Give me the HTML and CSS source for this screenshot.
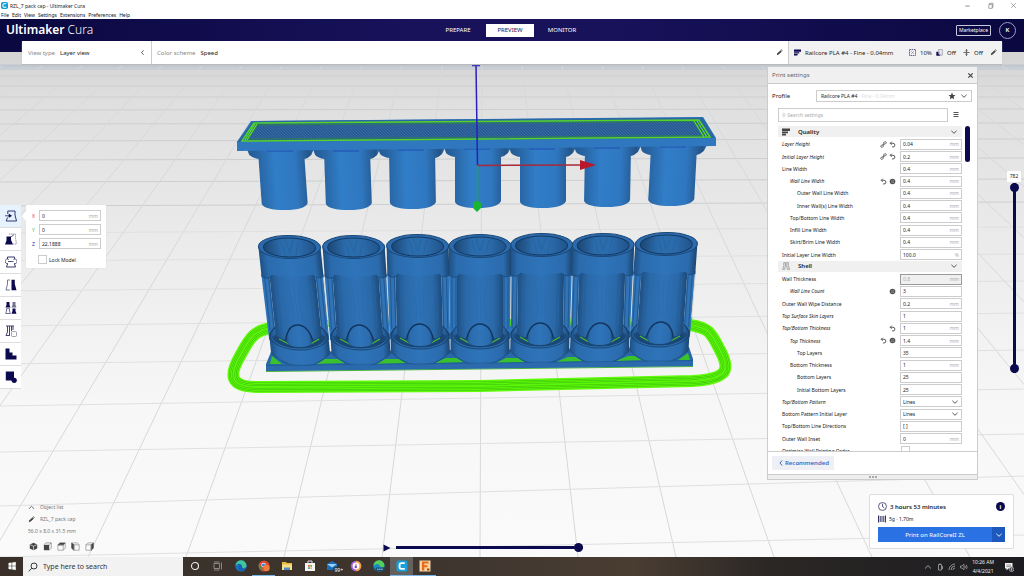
FILE: index.html
```html
<!DOCTYPE html>
<html lang="en">
<head>
<meta charset="utf-8">
<title>RZL_7 pack cap - Ultimaker Cura</title>
<link rel="stylesheet" href="styles.css">
</head>
<body>
<svg class="sprites" aria-hidden="true">
  <symbol id="chev-down" viewBox="0 0 8 8"><path d="M1.400 2.800 4 5.300 6.600 2.800" fill="none" stroke="currentColor" stroke-width=".9"/></symbol>
  <symbol id="chev-left" viewBox="0 0 8 8"><path d="M5.200 1.500 2.900 4 5.200 6.500" fill="none" stroke="currentColor" stroke-width="1"/></symbol>
  <symbol id="chev-up" viewBox="0 0 8 8"><path d="M1 5.500 4 2.600 7 5.500" fill="none" stroke="currentColor" stroke-width=".9"/></symbol>
  <symbol id="pencil" viewBox="0 0 8 8"><path d="M1 7 1.600 4.900 5.200 1.300 6.700 2.800 3.100 6.400Z" fill="currentColor"/><path d="M5.600.9 6.300.4 7.600 1.700 7.100 2.400Z" fill="currentColor"/></symbol>
  <symbol id="reset" viewBox="0 0 8 8"><path d="M1.500 2.600H4.600a2.100 2.100 0 0 1 0 4.200H3.400M3.100.8 1.300 2.600 3.100 4.400" fill="none" stroke="currentColor" stroke-width="1"/></symbol>
  <symbol id="link" viewBox="0 0 8 8"><g fill="none" stroke="currentColor" stroke-width=".9"><rect x="4" y="1" width="3.200" height="2.400" rx="1.200" transform="rotate(-45 5.600 2.200)"/><rect x=".8" y="4.600" width="3.200" height="2.400" rx="1.200" transform="rotate(-45 2.400 5.800)"/><path d="M3 5 5 3"/></g></symbol>
  <symbol id="fx" viewBox="0 0 8 8"><circle cx="4" cy="4" r="3.200" fill="currentColor"/><path d="M3.300 1.500V6.500M5 1.700V6.300M1.500 3.200H6.500M1.500 5H6.500" stroke="#bbb" stroke-width=".4"/></symbol>
  <symbol id="quality" viewBox="0 0 8 8"><path d="M0 .5H8V3H0ZM0 3.600H6V5.200H0ZM0 5.800H4V7.400H0Z" fill="currentColor"/></symbol>
  <symbol id="shell" viewBox="0 0 8 8"><path d="M1.800.6H3.400V3.800L2.600 7.400H.6L1.800 3.800ZM4.700.6H6.300V3.800L7.500 7.400H5.400L4.700 3.800Z" fill="none" stroke="currentColor" stroke-width=".7"/></symbol>
</svg>

<header class="titlebar">
  <svg class="app-icon" viewBox="0 0 8 8"><rect width="8" height="8" rx="2" fill="#0e9fd8"/><path d="M6 2H3.500Q2.200 2 2.200 3.200V4.800Q2.200 6 3.500 6H6" fill="none" stroke="#fff" stroke-width="1.200"/></svg>
  <span class="grow">RZL_7 pack cap - Ultimaker Cura</span>
  <button class="win" aria-label="Minimize"><svg viewBox="0 0 8 8"><path d="M2 4.500H6" stroke="#777" stroke-width=".7"/></svg></button>
  <button class="win" aria-label="Restore"><svg viewBox="0 0 8 8"><path d="M2.500 3H5.500V6.500H2.500ZM3.300 3V2H6.200V5.500H5.500" fill="none" stroke="#666" stroke-width=".5"/></svg></button>
  <button class="win" aria-label="Close"><svg viewBox="0 0 8 8"><path d="M2 2 6 6M6 2 2 6" stroke="#666" stroke-width=".5"/></svg></button>
</header>
<nav class="menubar" aria-label="Menu">
  <a href="#file">File</a><a href="#edit">Edit</a><a href="#view">View</a><a href="#settings">Settings</a><a href="#extensions">Extensions</a><a href="#preferences">Preferences</a><a href="#help">Help</a>
</nav>
<div class="appbar">
  <div class="brand"><b>Ultimaker</b> <span>Cura</span></div>
  <nav class="stages" aria-label="Stages">
    <button>PREPARE</button><button class="on">PREVIEW</button><button>MONITOR</button>
  </nav>
  <div class="account"><button class="market">Marketplace</button><button class="avatar">K</button></div>
</div>

<main class="workspace">
  <svg class="scene" viewBox="0 52 1024 505" preserveAspectRatio="xMidYMid slice" aria-hidden="true">
    <defs>
      <linearGradient id="floor" x1="0" y1="0" x2="0" y2="1"><stop offset="0" stop-color="#d4d4d4"/><stop offset=".1" stop-color="#dfdfdf"/><stop offset=".4" stop-color="#ececec"/><stop offset=".7" stop-color="#f7f7f7"/><stop offset="1" stop-color="#fafafa"/></linearGradient>
      <linearGradient id="tube"><stop offset="0" stop-color="#245a92"/><stop offset=".12" stop-color="#27629f"/><stop offset=".4" stop-color="#317dc7"/><stop offset=".7" stop-color="#2f78c1"/><stop offset=".93" stop-color="#235488"/><stop offset="1" stop-color="#2c70b4"/></linearGradient>
      <linearGradient id="stem"><stop offset="0" stop-color="#1f5083"/><stop offset=".2" stop-color="#2a69a9"/><stop offset=".5" stop-color="#2e72b6"/><stop offset=".8" stop-color="#2a69a9"/><stop offset="1" stop-color="#1d4b7b"/></linearGradient>
      <linearGradient id="collar"><stop offset="0" stop-color="#1f5083"/><stop offset=".12" stop-color="#2a6bad"/><stop offset=".5" stop-color="#2f74b9"/><stop offset=".88" stop-color="#2a6bad"/><stop offset="1" stop-color="#1c4672"/></linearGradient>
      <linearGradient id="bore"><stop offset="0" stop-color="#1c4672"/><stop offset=".35" stop-color="#2b6cad"/><stop offset=".65" stop-color="#2b6cad"/><stop offset="1" stop-color="#215389"/></linearGradient>
      <pattern id="hatch" width="3" height="3" patternUnits="userSpaceOnUse"><rect width="3" height="3" fill="#285b93"/><path d="M0 0 3 3" stroke="#3d72a8" stroke-width=".7"/></pattern>
      <g id="peg">
        <path d="M-34-2H33L30 4Q27 7 23 8V52Q20 59 0 59Q-20 59 -23 53V8Q-29 7 -32 4Z" fill="url(#tube)"/>
        <path d="M-14 0H12" stroke="#1d3fae" stroke-width=".8"/>
      </g>
      <g id="cup">
        <path d="M-31-64H-23V2H-30ZM23-64H31L30 2H23Z" fill="#2f73b8"/>
        <path d="M-24-64V-2M24-64V-2M-28-60V-8M28-60V-8" stroke="#205285" stroke-width=".8"/>
        <path d="M31-60 30.500-14" stroke="#dcd8ce" stroke-width="1"/>
        <path d="M30.500-18V-11" stroke="#48d327"/>
        <path d="M-29.500-4Q-20-14 0-14T29.500-4V16Q18 28 0 28T-29.500 16Z" fill="url(#collar)"/>
        <path d="M-29-2Q-27-9-20-12M29-2Q27-9 20-12" fill="none" stroke="#173e69" stroke-width="1"/>
        <path d="M-25-1A25 11 0 0 0 25-1Q22-8 0-8T-25-1Z" fill="#1c4775"/>
        <path d="M-23-65H23V-3Q18 3 0 3T-23-3Z" fill="url(#stem)"/>
        <path d="M-20 1-11 6M20 1 11 6" stroke="#42bd38" stroke-width="1.300"/>
        <path d="M-13 4V1Q-11-13 0-13T13 1V4Q11 9 0 9T-13 4Z" fill="url(#collar)"/>
        <path d="M-13.500 2C-11-8-7-13 0-13S11-8 13.500 2" fill="none" stroke="#12355e" stroke-width="1.300"/>
        <path d="M-29-2A29 14 0 0 0 29-2M-26-2A26 12 0 0 0 26-2" fill="none" stroke="#194672" stroke-width="1"/>
        <path d="M-29.500 14Q-18 28 0 28T29.500 14" fill="none" stroke="#1f5389" stroke-width="1"/>
        <path d="M-31-91V-62Q-25-57-20-63Q0-59 20-63Q25-59 31-62V-91Z" fill="url(#collar)"/>
        <path d="M-31-62Q-25-57-20-63M20-63Q25-58 31-62" fill="none" stroke="#1d4e80" stroke-width="1"/>
        <path d="M-6-55Q0-20-5-17M0-58 1-18M7-55Q2-38 6-18M-12-58-11-16M13-54V-17M-18-56V-10M18-56V-10" fill="none" stroke="#286aab" stroke-width=".5"/>
        <ellipse cy="-91" rx="31" ry="11.500" fill="#2b6aac" stroke="#1a4776" stroke-width="1"/>
        <ellipse cy="-90.500" rx="26" ry="9.500" fill="url(#bore)" stroke="#143b66" stroke-width="1"/>
        <path d="M-4-98 0-86 4-98M-8-97-5-83M9-97 6-83" fill="none" stroke="#245d98" stroke-width=".6"/>
      </g>
      <path id="skirt" d="M272 328C252 330 248 342 240 356C228 377 231 387 258 387L480 386 692 381C728 379 730 370 721 352C711 333 710 328 690 325"/>
    </defs>
    <rect y="52" width="1024" height="505" fill="url(#floor)"/>
    <rect y="64" width="1024" height="6" fill="#c9ced4"/>
    <path d="M0 66H1024" stroke="#b9c2cc"/>
    <g fill="none" stroke="#cccecf" stroke-width="1">
      <path d="M0 76H1024M0 86H1024M0 97H1024M0 110 1024 109M0 124 1024 123M0 141 1024 139M0 160 1024 158M0 182 1024 179M0 206 1024 202"/>
      <path d="M482 66 480 557M442 66 382 557M402 66 284 557M362 66 186 557M322 66 88 557M282 66-10 557M242 66-108 557M202 66-206 557M162 66-304 557M122 66-402 557M82 66-500 557M42 66-598 557M2 66-696 557M522 66 578 557M562 66 676 557M602 66 774 557M642 66 872 557M682 66 970 557M722 66 1068 557M762 66 1166 557M802 66 1264 557M842 66 1362 557M882 66 1460 557M922 66 1558 557M962 66 1656 557M1002 66 1754 557" stroke="#d6d8da"/>
      <path d="M0 233 1024 227M0 261 1024 254M0 291 1024 281M0 326 1024 313M0 364 1024 350M0 406 1024 389M0 452 1024 434M0 506 1024 476M0 557 1024 535" stroke="#dfe0e1"/>
    </g>

    <g fill="none">
      <use href="#skirt" stroke="#62fb0b" stroke-width="12"/>
      <use href="#skirt" stroke="#3cc00c" stroke-width="9"/>
      <use href="#skirt" stroke="#5bf50a" stroke-width="8"/>
      <use href="#skirt" stroke="#3cc00c" stroke-width="6"/>
      <use href="#skirt" stroke="#5bf50a" stroke-width="5"/>
      <use href="#skirt" stroke="#3cc00c" stroke-width="3"/>
      <use href="#skirt" stroke="#5bf50a" stroke-width="2"/>
    </g>
    <path d="M271 352 689 347 693 359V366L266 371V364Z" fill="#2968a9"/>
    <path d="M266 371.500 693 366.500" stroke="#48b437" stroke-width="1"/>
    <path d="M270 364 272 356 282 364ZM312 364 322 359 338 359 345 363ZM374 364 384 359 400 359 406 363ZM434 363 446 358 460 358 466 362ZM496 363 506 358 520 358 527 362ZM556 362 568 357 582 357 588 361ZM616 361 628 356 642 356 648 360ZM678 360 688 353 690 360Z" fill="#39c22b"/>
    <g>
      <use href="#cup" transform="translate(299 338) skewX(6)"/>
      <use href="#cup" transform="translate(360 338) skewX(4)"/>
      <use href="#cup" transform="translate(660 335) skewX(-4)"/>
      <use href="#cup" transform="translate(600 336) skewX(-2)"/>
      <use href="#cup" transform="translate(420 337) skewX(1.500)"/>
      <use href="#cup" transform="translate(540 336) skewX(-1)"/>
      <use href="#cup" transform="translate(480 337)"/>
    </g>
    <path d="M266 366 693 361V366L266 371Z" fill="#2a6aad"/>
    <path d="M266 365.500 693 360.500" stroke="#20578e" stroke-width=".6"/>

    <use href="#peg" transform="translate(281 151) skewX(4)"/>
    <use href="#peg" transform="translate(347 151) skewX(2)"/>
    <use href="#peg" transform="translate(412 150) skewX(1)"/>
    <use href="#peg" transform="translate(478 149)"/>
    <use href="#peg" transform="translate(543 149)"/>
    <use href="#peg" transform="translate(608 148) skewX(-1)"/>
    <use href="#peg" transform="translate(674 147) skewX(-3)"/>
    <path d="M251 121 703 117 716 138V146L237 151V142Z" fill="#2f77bf"/>
    <path d="M253 121 703 117.500 715 138 237 142Z" fill="#2b67a4"/>
    <path d="M254 123 699 120 710 137 242 141Z" fill="url(#hatch)" stroke="#55d32b" stroke-width="1.500"/>
    <path d="M258 125 695 121.500 704 135.500 248 139Z" fill="none" stroke="#2b7d58" stroke-width="1"/>
    <path d="M255 124 245 140M257 124 247 140M697 121 707 137M694 121 704 137" stroke="#59e020" stroke-width="1.200"/>
    <path d="M472 65.500H480M476 65 477.500 165" stroke="#2a20bd" stroke-width="1.500"/>
    <path d="M477.500 165.500 582 165" stroke="#a92839" stroke-width="1.500"/>
    <path d="M580 160 596 165 580 170Z" fill="#b8182a"/>
    <path d="M477.500 166V203" stroke="#1ba648" stroke-width="1.500"/>
    <path d="M473 203Q477 199 481 203V208L477 212 473 208Z" fill="#18b530"/>
  </svg>

  <section class="stagebar">
    <button class="viewtype"><span class="dim">View type</span><span class="grow">Layer view</span><svg class="ic"><use href="#chev-left"/></svg></button>
    <button class="scheme"><span class="dim">Color scheme</span><span class="grow">Speed</span><svg class="ic"><use href="#pencil"/></svg></button>
    <button class="summary">
      <svg class="ic navy"><use href="#quality"/></svg><span class="name">Railcore PLA #4 - Fine - 0.04mm</span>
      <svg class="ic" viewBox="0 0 8 8"><rect x=".6" y=".6" width="6.800" height="6.800" fill="none" stroke="#23235a" stroke-width=".8" stroke-dasharray="1.800 .7"/><path d="M2.500 2.500 5.500 5.500M5.500 2.500 2.500 5.500" stroke="#77779a" stroke-width=".7"/></svg><span class="val">10%</span>
      <svg class="ic" viewBox="0 0 8 8"><path d="M2.800.7H7.200V7H4.800Z" fill="none" stroke="#666689" stroke-width=".6"/><path d="M.4 3H2.800V5.400L5 7.600H.4Z" fill="#0c0a4e"/></svg><span class="val">Off</span>
      <svg class="ic" viewBox="0 0 8 8"><path d="M.5 4H7.500M4 0V3M4 8V5M2.700 1.800 4 3 5.300 1.800M2.700 6.200 4 5 5.300 6.200" fill="none" stroke="#333" stroke-width=".8"/></svg><span class="val">Off</span>
      <svg class="ic"><use href="#pencil"/></svg>
    </button>
  </section>

  <div class="content">
    <aside class="left">
      <div class="toolrow">
        <div class="tools" role="toolbar" aria-label="Tools">
          <button class="on" aria-label="Move"><svg viewBox="0 0 12 12"><path d="M2.800 1H10V5L11.500 11H1.200L2.500 7.500M2.800 1V4" fill="none" stroke="#23235e" stroke-width=".9"/><path d="M0 5.800H5M4 4.300 6.500 5.800 4 7.300Z" fill="#0c0a4e" stroke="#0c0a4e" stroke-width=".7"/></svg></button>
          <button aria-label="Scale"><svg viewBox="0 0 12 12"><path d="M4 1H10.500V5L11.500 11H8" fill="none" stroke="#8a8aa6" stroke-width=".8" stroke-dasharray="1.500 .6"/><path d="M1.500 3.500H6V7L8 11.500H0L1.500 7.500Z" fill="#0c0a4e"/><path d="M6 4 9 1.500" stroke="#33336a" stroke-width=".8"/></svg></button>
          <button aria-label="Rotate"><svg viewBox="0 0 12 12"><path d="M2.500 3V1H9.500V3M9.500 8 10.500 11H1.500L2.500 8" fill="none" stroke="#23235e" stroke-width=".9"/><path d="M3.800 3.500A2.300 2.300 0 1 0 3 7.500M8.500 3.500A2.300 2.300 0 1 1 9 7.500M3 5.500H8.500" fill="none" stroke="#44446f" stroke-width=".9"/></svg></button>
          <button aria-label="Mirror"><svg viewBox="0 0 12 12"><path d="M6.500.8H9.800V5L11.500 11.200H6.500Z" fill="#0c0a4e"/><path d="M5 1H2.500V5L1 11H5" fill="none" stroke="#55557c" stroke-width=".8"/></svg></button>
          <button aria-label="Per model settings"><svg viewBox="0 0 12 12"><path d="M1.500 0H4.500V3L5.500 5.400H.5L1.500 3ZM7.500 6.400H10.500V9L11.500 11.800H6.500L7.500 9Z" fill="#0c0a4e"/><path d="M7.500 0H10.500V3L11.500 5.400H6.500L7.500 3Z" fill="#74748f"/><path d="M1.500 6.700H4.500V9L5.300 11.500H.7L1.500 9Z" fill="none" stroke="#33336a" stroke-width=".7"/></svg></button>
          <button aria-label="Support blocker"><svg viewBox="0 0 12 12"><path d="M1 1H9M2.500 1V7L1 10.500H5M4.500 1V10M6.500 1V6M8 1V5" fill="none" stroke="#44446f" stroke-width="1"/><rect x="6.500" y="6.500" width="5" height="5" rx="1" fill="#fff" stroke="#777791" stroke-width=".7"/></svg></button>
          <button aria-label="Stairs"><svg viewBox="0 0 12 12"><path d="M.5.500H4.500V4.500H7.500V7.500H11.500V11.500H.5Z" fill="#0c0a4e"/></svg></button>
          <button aria-label="Measure"><svg viewBox="0 0 12 12"><path d="M.8.500H9V9.500H.8Z" fill="#0c0a4e"/><circle cx="9.200" cy="9.300" r="2.600" fill="#0c0a4e"/></svg></button>
        </div>
        <form class="movebox">
          <label><span class="x">X</span><span class="field"><input value="0"><i>mm</i></span></label>
          <label><span class="y">Y</span><span class="field"><input value="0"><i>mm</i></span></label>
          <label><span class="z">Z</span><span class="field"><input value="22.1888"><i>mm</i></span></label>
          <label class="lock"><input type="checkbox">Lock Model</label>
        </form>
      </div>
      <div class="objects">
        <button><svg class="ic"><use href="#chev-up"/></svg>Object list</button>
        <button><svg class="ic"><use href="#pencil"/></svg>RZL_7 pack cap</button>
        <span>56.0 x 8.0 x 31.5 mm</span>
        <div class="views">
          <button aria-label="3D view"><svg viewBox="0 0 8 8"><path d="M4 .6 7.300 2.200V5.800L4 7.400.7 5.800V2.200Z" fill="#444"/><path d="M1 2.400 4 3.800 7 2.400M4 3.800V7" fill="none" stroke="#eee" stroke-width=".6"/></svg></button>
          <button aria-label="Front view"><svg viewBox="0 0 8 8"><path d="M.8 2.500H5.500V7.300H.8Z" fill="#444"/><path d="M.8 2.500 2.500.8H7.300V5.500L5.500 7.300M5.500 2.500 7.300.8" fill="none" stroke="#777" stroke-width=".6"/></svg></button>
          <button aria-label="Top view"><svg viewBox="0 0 8 8"><path d="M.8 2.700 2.500.8H7.300L5.500 2.700Z" fill="#444" stroke="#444" stroke-width=".6"/><path d="M.8 2.500H5.500V7.300H.8ZM5.500 7.300 7.300 5.500V.8" fill="none" stroke="#888" stroke-width=".6"/></svg></button>
          <button aria-label="Left view"><svg viewBox="0 0 8 8"><path d="M.6.8 2.600 2.500V7.300L.6 5.500Z" fill="#444" stroke="#444" stroke-width=".6"/><path d="M.8.8H5.500L7.300 2.500V7.300H2.500V2.500H7.300" fill="none" stroke="#888" stroke-width=".6"/></svg></button>
          <button aria-label="Right view"><svg viewBox="0 0 8 8"><path d="M7.400.8 5.500 2.500V7.300L7.400 5.500Z" fill="#444" stroke="#444" stroke-width=".6"/><path d="M.8 2.500H5.500V7.300H.8ZM.8 2.500 2.500.8H7.300" fill="none" stroke="#888" stroke-width=".6"/></svg></button>
        </div>
      </div>
    </aside>

    <div class="player">
      <button aria-label="Play"><svg viewBox="0 0 8 8"><path d="M.5.500 7.500 4 .5 7.500Z" fill="#0c0a4e"/></svg></button>
      <input type="range" min="0" max="100" value="100" aria-label="Simulation position">
    </div>

    <aside class="right">
      <section class="panel">
        <header><h2>Print settings</h2><button aria-label="Close"><svg viewBox="0 0 8 8"><path d="M1.500 1.500 6.500 6.500M6.500 1.500 1.500 6.500" stroke="#444" stroke-width="1.400"/></svg></button></header>
        <div class="profile"><span id="pl">Profile</span>
          <button aria-labelledby="pl"><span class="grow">Railcore PLA #4 <em>- Fine - 0.04mm</em></span><svg class="ic" viewBox="0 0 8 8"><path d="M4 .6 5 2.900 7.500 3.100 5.600 4.800 6.200 7.300 4 6 1.800 7.300 2.400 4.800.5 3.100 3 2.900Z" fill="#444"/></svg><svg class="ic"><use href="#chev-down"/></svg></button>
        </div>
        <div class="search"><input type="search" placeholder="⚲ Search settings" aria-label="Search settings"><button aria-label="Visibility"><svg viewBox="0 0 8 8"><path d="M1.500 1.500H6.500M1.500 3.500H6.500M1.500 5.500H6.500" stroke="#555" stroke-width="1"/></svg></button></div>
        <div class="scroller">
          <div class="rows">
            <button class="cat"><svg class="ic"><use href="#quality"/></svg><span>Quality</span><svg class="ic"><use href="#chev-down"/></svg></button>
            <label class="chg"><span>Layer Height</span><svg class="ic"><use href="#link"/></svg><svg class="ic"><use href="#reset"/></svg><b class="field"><input value="0.04"><i>mm</i></b></label>
            <label class="chg"><span>Initial Layer Height</span><svg class="ic"><use href="#link"/></svg><svg class="ic"><use href="#reset"/></svg><b class="field"><input value="0.2"><i>mm</i></b></label>
            <label><span>Line Width</span><b class="field"><input value="0.4"><i>mm</i></b></label>
            <label class="chg in1"><span>Wall Line Width</span><svg class="ic"><use href="#reset"/></svg><svg class="ic"><use href="#fx"/></svg><b class="field"><input value="0.4"><i>mm</i></b></label>
            <label class="in2"><span>Outer Wall Line Width</span><b class="field"><input value="0.4"><i>mm</i></b></label>
            <label class="in2"><span>Inner Wall(s) Line Width</span><b class="field"><input value="0.4"><i>mm</i></b></label>
            <label class="in1"><span>Top/Bottom Line Width</span><b class="field"><input value="0.4"><i>mm</i></b></label>
            <label class="in1"><span>Infill Line Width</span><b class="field"><input value="0.4"><i>mm</i></b></label>
            <label class="in1"><span>Skirt/Brim Line Width</span><b class="field"><input value="0.4"><i>mm</i></b></label>
            <label><span>Initial Layer Line Width</span><b class="field"><input value="100.0"><i>%</i></b></label>
            <button class="cat"><svg class="ic soft"><use href="#shell"/></svg><span>Shell</span><svg class="ic"><use href="#chev-down"/></svg></button>
            <label><span>Wall Thickness</span><b class="field off"><input value="0.8" disabled><i>mm</i></b></label>
            <label class="chg in1"><span>Wall Line Count</span><svg class="ic"><use href="#fx"/></svg><b class="field"><input value="3"></b></label>
            <label><span>Outer Wall Wipe Distance</span><b class="field"><input value="0.2"><i>mm</i></b></label>
            <label class="chg"><span>Top Surface Skin Layers</span><b class="field"><input value="1"></b></label>
            <label class="chg"><span>Top/Bottom Thickness</span><svg class="ic"><use href="#reset"/></svg><b class="field"><input value="1"><i>mm</i></b></label>
            <label class="chg in1"><span>Top Thickness</span><svg class="ic"><use href="#reset"/></svg><svg class="ic"><use href="#fx"/></svg><b class="field"><input value="1.4"><i>mm</i></b></label>
            <label class="in2"><span>Top Layers</span><b class="field"><input value="35"></b></label>
            <label class="in1"><span>Bottom Thickness</span><b class="field"><input value="1"><i>mm</i></b></label>
            <label class="in2"><span>Bottom Layers</span><b class="field"><input value="25"></b></label>
            <label class="in2"><span>Initial Bottom Layers</span><b class="field"><input value="25"></b></label>
            <label class="chg"><span>Top/Bottom Pattern</span><b class="field"><select><option>Lines</option></select><svg class="ic"><use href="#chev-down"/></svg></b></label>
            <label><span>Bottom Pattern Initial Layer</span><b class="field"><select><option>Lines</option></select><svg class="ic"><use href="#chev-down"/></svg></b></label>
            <label><span>Top/Bottom Line Directions</span><b class="field"><input value="[ ]"></b></label>
            <label><span>Outer Wall Inset</span><b class="field"><input value="0"><i>mm</i></b></label>
            <label class="chk"><span>Optimize Wall Printing Order</span><input type="checkbox"></label>
          </div>
          <div class="thumb"></div>
        </div>
        <footer><button><svg class="ic"><use href="#chev-left"/></svg>Recommended</button></footer>
        <div class="grip"><svg viewBox="0 0 8 4"><path d="M0 2H2M3 2H5M6 2H8" stroke="#666" stroke-width="1.200"/></svg></div>
      </section>

      <div class="layers">
        <output>782</output>
        <div class="track">
          <input type="range" min="0" max="782" value="782" aria-label="Top layer">
          <input type="range" min="0" max="782" value="0" aria-label="Bottom layer">
        </div>
      </div>

      <section class="job">
        <div class="line"><svg class="big" viewBox="0 0 10 10"><circle cx="5" cy="5" r="4.400" fill="none" stroke="#222255" stroke-width=".8"/><path d="M5 2V5.200L7 6.500" fill="none" stroke="#222255" stroke-width=".8"/></svg><strong class="grow">3 hours 53 minutes</strong><button class="info" aria-label="Details">i</button></div>
        <div class="line small"><svg class="ic" viewBox="0 0 8 8"><path d="M.6.500V7.500M7.400.500V7.500" stroke="#222255" stroke-width="1"/><path d="M2.300 1V7M4 1V7M5.700 1V7" stroke="#55557c" stroke-width="1.100"/></svg><span>5g · 1.70m</span></div>
        <div class="print"><button class="grow">Print on RailCoreII ZL</button><button class="more" aria-label="Choose output"><svg class="ic"><use href="#chev-down"/></svg></button></div>
      </section>
    </aside>
  </div>
</main>

<footer class="taskbar">
  <button class="tb" aria-label="Start"><svg viewBox="0 0 12 12"><path d="M2.500 3 5.600 2.600V5.700H2.500ZM6.200 2.500 9.800 2V5.700H6.200ZM2.500 6.300H5.600V9.400L2.500 9ZM6.200 6.300H9.800V10L6.200 9.500Z" fill="#fff"/></svg></button>
  <label class="find"><svg viewBox="0 0 10 10"><circle cx="6" cy="4" r="3" fill="none" stroke="#222" stroke-width=".9"/><path d="M3.800 6.200.8 9.300" stroke="#222" stroke-width=".9"/></svg><input type="text" placeholder="Type here to search" aria-label="Type here to search"></label>
  <button class="tb" aria-label="Cortana"><svg viewBox="0 0 12 12"><circle cx="6" cy="6" r="3.500" fill="none" stroke="#eee" stroke-width="1.100"/></svg></button>
  <button class="tb" aria-label="Task view"><svg viewBox="0 0 12 12"><path d="M2 3.500H7.500V8.500H2ZM9.500 2.500V9.500M2 2H7.500M2 10H7.500" fill="none" stroke="#aaa" stroke-width=".7"/></svg></button>
  <button class="tb" aria-label="Edge"><svg viewBox="0 0 12 12"><circle cx="6" cy="6" r="5.600" fill="#1676c5"/><path d="M.5 6A5.500 5.500 0 0 1 11.500 5.500Q11.500 8 8.500 8 6.500 8 7 6 6 3.500 3 4.200 1 4.800.5 6Z" fill="#3fc7a0"/><path d="M1 5Q5 2 7 6 6 9 10 9.500 7 12 4 10.500 2 8 4.500 5 2.500 4 1 5Z" fill="#1b5fae"/></svg></button>
  <button class="tb open" aria-label="Chrome"><svg viewBox="0 0 12 12"><circle cx="6" cy="6" r="5.500" fill="#d94a35"/><path d="M1 3.500 5 10.800A5.500 5.500 0 0 1 1 3.500Z" fill="#3a9a4c"/><circle cx="5.500" cy="5" r="2.200" fill="#eee"/><circle cx="5.500" cy="5" r="1.600" fill="#3c7fe0"/><circle cx="8.500" cy="8" r="3.200" fill="#ee7c3c"/></svg></button>
  <button class="tb" aria-label="File Explorer"><svg viewBox="0 0 12 12"><path d="M1 2H5L6 3H11V10H1Z" fill="#e9bd3c"/><path d="M1 4.500H11V10H1Z" fill="#f6df86"/><path d="M3 7.500H9V10H3Z" fill="#4d8dc6"/></svg></button>
  <button class="tb" aria-label="Store"><svg viewBox="0 0 12 12"><path d="M4 3V1H8V3" fill="none" stroke="#eee" stroke-width=".9"/><path d="M1 3H11V11H1Z" fill="#f4f4f0"/><path d="M4 5H5.800V6.800H4Z" fill="#e2573d"/><path d="M6.200 5H8V6.800H6.200Z" fill="#7ab33c"/><path d="M4 7.200H5.800V9H4Z" fill="#3b99dc"/><path d="M6.200 7.200H8V9H6.200Z" fill="#eebb33"/></svg></button>
  <button class="tb mail" aria-label="Mail"><svg viewBox="0 0 12 12"><path d="M0 4 5 1 10 4V10H0Z" fill="#1a6fbd"/><path d="M0 4H10L5 7.500Z" fill="#9ad4f5"/></svg><span>99+</span></button>
  <button class="tb" aria-label="Music"><svg viewBox="0 0 12 12"><circle cx="6" cy="6" r="5.300" fill="#a45be0"/><path d="M6 .7A5.300 5.300 0 0 1 6 11.300Z" fill="#f0a03c"/><circle cx="6" cy="6" r="3.400" fill="#fff"/><path d="M6 3.800V6.500" stroke="#d55" stroke-width="1"/><circle cx="5.800" cy="7" r="1.300" fill="#6a55c8"/></svg></button>
  <button class="tb" aria-label="Edge Dev"><svg viewBox="0 0 12 12"><circle cx="6" cy="6" r="5.600" fill="#1a8ccb"/><path d="M.5 6A5.500 5.500 0 0 1 11.500 5.500Q10 8.500 7.500 7 6.500 3.500 3 4.200 1 4.800.5 6Z" fill="#55d05c"/><rect x="2.500" y="7.500" width="9" height="3.500" rx="1" fill="#104d6e"/><path d="M4 9.200H10" stroke="#cde" stroke-width="1" stroke-dasharray="1.500 .6"/></svg></button>
  <button class="tb active open" aria-label="Cura"><svg viewBox="0 0 12 12"><rect x=".5" y=".5" width="11" height="11" rx="2.500" fill="#13a2dc"/><path d="M8.800 3.200H5.500Q3.600 3.200 3.600 5V7Q3.600 8.800 5.500 8.800H8.800" fill="none" stroke="#fff" stroke-width="1.800"/></svg></button>
  <button class="tb open" aria-label="Fusion"><svg viewBox="0 0 12 12"><rect x=".5" y=".5" width="11" height="11" fill="#f6d3a6"/><path d="M3 1.500H9.500V3.500H5.300V5.200H8.500V7.200H5.300V10.500H3Z" fill="#e36d18"/><path d="M8 8.500H10.500V10.500H8Z" fill="#a84b10"/></svg></button>
  <div class="tray">
    <svg class="ic"><use href="#chev-up"/></svg>
    <svg class="ic" viewBox="0 0 8 8"><path d="M2.500 1.500H5.500V7H2.500ZM4 .3V1.500M6.500 3V6" fill="none" stroke="currentColor" stroke-width=".8"/></svg>
    <svg class="ic" viewBox="0 0 8 8"><path d="M1 7A6 6 0 0 1 7 1M3 7A4 4 0 0 1 7 3M5 7A2 2 0 0 1 7 5" fill="none" stroke="currentColor" stroke-width=".8"/></svg>
    <svg class="ic" viewBox="0 0 8 8"><path d="M.5 3H2L4 1.300V6.700L2 5H.5ZM5 2.800Q6 4 5 5.200M6.300 1.800Q8 4 6.300 6.200" fill="none" stroke="currentColor" stroke-width=".7"/></svg>
    <time>10:26 AM<br>4/4/2021</time>
    <button class="note" aria-label="Notifications"><svg viewBox="0 0 10 10"><path d="M1 1H8.500V6.500H4.500L2.500 8.500V6.500H1Z" fill="#f2f2f2"/><path d="M2.300 3H7.200M2.300 4.600H7.200" stroke="#555" stroke-width=".6"/><circle cx="7.600" cy="7.400" r="2.300" fill="#444" stroke="#ddd" stroke-width=".5"/><path d="M7.600 6.200V8.600" stroke="#fff" stroke-width=".7"/></svg></button>
  </div>
</footer>
</body>
</html>
```
FILE: styles.css
```css
* { box-sizing: border-box; }
body {
  margin: 0;
  min-height: 100vh;
  display: flex;
  flex-direction: column;
  font-family: "Noto Sans", "Open Sans", sans-serif;
  font-size: 6px;
  line-height: 8px;
  color: #222;
  background: #fff;
}
button, input, select { font: inherit; color: inherit; margin: 0; padding: 0; border: 0; background: none; min-width: 0; }
button { text-align: left; }
svg { display: block; flex: none; }
.sprites { display: none; }
.grow { flex: 1; }
.ic { width: 8px; height: 8px; flex: none; }
.dim { color: #888; }
.navy { color: #0c0a4e; }

/* window frame */
.titlebar { height: 11px; display: flex; align-items: center; gap: 2px; padding-left: 1px; font-size: 5px; }
.app-icon { width: 7px; height: 7px; }
.win { width: 21px; display: flex; justify-content: center; }
.win svg { width: 9px; height: 9px; }
.menubar { height: 8px; display: flex; gap: 3px; padding-left: 1px; font-size: 5px; line-height: 8px; }
.menubar a { color: #111; text-decoration: none; }

.appbar {
  height: 22px;
  display: grid;
  grid-template-columns: 1fr auto 1fr;
  align-items: center;
  color: #fff;
  background: linear-gradient(90deg, #0a0840, #17125a 40%, #17125a 60%, #0a0840);
}
.brand { padding-left: 6px; font-size: 12px; line-height: 16px; font-weight: 300; }
.brand b { font-weight: 600; }
.stages { display: flex; gap: 4px; margin-right: 4px; }
.stages button { width: 48px; height: 13px; text-align: center; }
.stages .on { background: #fff; color: #17125a; }
.account { display: flex; justify-content: flex-end; align-items: center; gap: 8px; padding-right: 8px; }
.market { height: 11px; padding: 0 2px; border: 1px solid #c9c9dd; border-radius: 1px; font-size: 5px; }
.avatar { width: 17px; height: 17px; border: 1px solid #9c9cc4; border-radius: 50%; text-align: center; font-weight: 600; }

/* workspace */
.workspace {
  flex: 1;
  display: flex;
  flex-direction: column;
  position: relative;
  background: linear-gradient(90deg, #0a0840, #17125a 40%, #17125a 60%, #0a0840);
}
.scene { position: absolute; left: 0; top: 11px; width: 100%; height: calc(100% - 11px); }
.stagebar { position: relative; display: flex; height: 23px; margin: 0 22px; background: #fff; box-shadow: 0 1px 1px #bbb; }
.stagebar button { display: flex; align-items: center; gap: 5px; padding: 0 5px; }
.stagebar .ic { width: 7px; height: 7px; color: #444; }
.stagebar .navy { color: #0c0a4e; }
.viewtype { width: 129px; }
.stagebar .viewtype { padding-left: 6px; }
.stagebar .scheme { flex: 1; border-left: 1px solid #ccc; }
.stagebar .summary { width: 214px; background: #f2f2f2; border-left: 1px solid #ccc; gap: 4px; }
.summary .name { flex: 1; }
.summary .val { min-width: 12px; }

.content { flex: 1; display: flex; position: relative; }
.left { width: 106px; display: flex; flex-direction: column; }
.toolrow { display: flex; gap: 5px; align-items: flex-start; margin-top: 141px; }
.tools { width: 22px; display: flex; flex-direction: column; background: #fff; border-radius: 0 2px 2px 0; }
.tools button { height: 23px; display: flex; align-items: center; justify-content: center; border-bottom: 1px solid #ddd; }
.tools .on { background: #e6f2fd; }
.tools svg { width: 12px; height: 12px; }
.movebox { position: relative; flex: 1; display: flex; flex-direction: column; gap: 3px; padding: 5px 5px 4px 6px; background: #fff; border-radius: 1px; box-shadow: 0 0 2px #ddd; font-size: 5px; }
.movebox::before { content: ""; position: absolute; left: -4px; top: 6px; border: 5px solid transparent; border-left: 0; border-right: 4px solid #fff; }
.movebox label { display: flex; align-items: center; gap: 3px; }
.movebox label > span:first-child { width: 4px; }
.x { color: #e0364b; }
.y { color: #58b368; }
.z { color: #2b2bb5; }
.movebox .lock { padding: 3px 0 0 6px; gap: 2px; }

.field { display: flex; align-items: center; height: 11px; width: 62px; border: 1px solid #ccc; background: #fff; padding: 0 2px; font-weight: 400; font-style: normal; }
.movebox .field { flex: 1; }
.field input, .field select { flex: 1; width: 0; height: 9px; appearance: none; outline: 0; }
.field i { color: #aaa; font-style: normal; }
.off { border-color: #999; background: #f0f0f0; color: #aaa; }
input[type="checkbox"] { appearance: none; width: 9px; height: 9px; border: 1px solid #ccc; background: #fff; }

.objects { margin-top: auto; padding: 0 0 6px 28px; display: flex; flex-direction: column; gap: 4px; font-size: 5px; color: #777; }
.objects button { display: flex; align-items: center; gap: 5px; white-space: nowrap; }
.objects .ic { width: 7px; height: 7px; color: #444; }
.views { display: flex; gap: 5px; padding: 3px 1px 0; }
.views svg { width: 9px; height: 9px; }

.player { flex: 1; align-self: flex-end; display: flex; justify-content: center; align-items: center; gap: 5px; padding: 0 0 5px 92px; }
.player svg { width: 8px; height: 8px; }
.player input { width: 187px; height: 9px; }
input[type="range"] { appearance: none; background: linear-gradient(#0c0a4e, #0c0a4e) center / 100% 3px no-repeat; }
input[type="range"]::-webkit-slider-thumb { appearance: none; width: 9px; height: 9px; border-radius: 50%; background: #0c0a4e; }

.right { width: 257px; display: grid; grid-template-columns: 211px 1fr; grid-template-rows: auto 1fr; }

/* print settings */
.panel { margin-top: 2px; background: #fff; border: 1px solid #ccc; display: flex; flex-direction: column; }
.panel header { height: 17px; display: flex; align-items: center; justify-content: space-between; padding: 0 3px 0 4px; background: #f0f0f0; border-bottom: 1px solid #ccc; }
.panel h2 { margin: 0; font-size: 6px; font-weight: 400; color: #666; }
.panel header svg { width: 7px; height: 7px; }
.profile { display: flex; align-items: center; height: 24px; padding: 0 5px 0 4px; }
.profile > span { width: 44px; }
.profile button { flex: 1; height: 12px; display: flex; align-items: center; gap: 4px; padding: 0 3px 0 4px; border: 1px solid #ccc; font-size: 5px; }
.profile em { font-style: normal; color: #ddd; }
.profile .ic { color: #444; }
.search { display: flex; align-items: center; gap: 4px; padding: 0 10px; }
.search input { width: 170px; height: 14px; padding: 0 3px; border: 1px solid #ccc; font-size: 5px; appearance: none; }
.search input::placeholder { color: #aaa; }
.search svg { width: 8px; height: 8px; }
.scroller { height: 325px; margin-top: 4px; padding: 0 7px 0 10px; display: flex; justify-content: space-between; align-items: flex-start; overflow: hidden; }
.rows { width: 184px; height: 331px; display: grid; grid-template-rows: repeat(27, 1fr); font-size: 5px; }
.rows label { display: flex; align-items: center; gap: 2px; padding-left: 4px; min-height: 0; }
.rows label > span { flex: 1; }
.rows .field { margin-left: 2px; }
.rows .ic { width: 8px; height: 8px; color: #444; }
.rows label > .ic { width: 7px; height: 7px; }
.rows .chg > span { font-style: italic; }
.rows .in1 { padding-left: 12px; }
.rows .in2 { padding-left: 19px; }
.rows .cat { display: flex; align-items: center; gap: 8px; padding: 0 4px; margin-bottom: 1px; background: #f0f0f0; font-size: 6px; font-weight: 600; }
.cat span { flex: 1; }
.rows .soft { color: #888; }
.chk input { margin-right: 52px; }
.thumb { width: 5px; height: 36px; border-radius: 3px; background: #0c0a4e; }
.panel footer { height: 23px; display: flex; align-items: center; padding-left: 4px; border-top: 1px solid #ccc; }
.panel footer button { display: flex; align-items: center; gap: 0; height: 14px; padding: 0 5px; background: #eef0f6; color: #3a67c0; font-size: 6px; font-weight: 600; }
.grip { height: 5px; display: flex; justify-content: center; background: #eee; border-top: 1px solid #ccc; }
.grip svg { width: 8px; height: 4px; }

/* layer slider */
.layers { margin-top: 107px; padding-right: 3px; display: flex; flex-direction: column; align-items: flex-end; gap: 1px; font-size: 5px; }
.layers output { width: 14px; height: 11px; line-height: 11px; text-align: center; background: #fff; border-radius: 1px; }
.track { display: grid; width: 9px; height: 190px; margin-right: 2px; }
.track input { grid-area: 1 / 1; writing-mode: vertical-lr; direction: rtl; width: 9px; height: 190px; background: linear-gradient(#0c0a4e, #0c0a4e) center / 3px 100% no-repeat; }

/* job card */
.job { grid-column: 1 / -1; align-self: end; justify-self: end; width: 145px; margin: 0 10px 8px 0; padding: 7px 8px 6px; display: flex; flex-direction: column; gap: 4px; background: #fff; border: 1px solid #ddd; border-radius: 2px; }
.line { display: flex; align-items: center; gap: 3px; }
.line strong { font-weight: 600; }
.small { font-size: 5px; }
.big { width: 9px; height: 9px; }
.info { width: 9px; height: 9px; border-radius: 50%; background: #0c0a4e; color: #fff; font-weight: 700; text-align: center; }
.print { display: flex; height: 15px; background: #2a72e4; color: #fff; }
.print .grow { text-align: center; }
.more { width: 13px; display: flex; align-items: center; justify-content: center; background: #1d58bd; }

/* taskbar */
.taskbar { height: 19px; display: flex; align-items: stretch; background: linear-gradient(90deg, #3a2f29, #3f3630 45%, #4a3d32 62%, #2b2725 75%, #1c1c20); color: #eee; }
.tb { width: 23px; display: flex; align-items: center; justify-content: center; border-bottom: 1px solid transparent; }
.tb svg { width: 12px; height: 12px; }
.open { border-color: #77b5e6; }
.active { background: #65615e; }
.find { width: 160px; display: flex; align-items: center; gap: 5px; padding-left: 5px; background: #f2f2f2; color: #333; font-size: 7px; }
.find svg { width: 10px; height: 10px; }
.find input { flex: 1; }
.find input::placeholder { color: #333; }
.mail { position: relative; }
.mail span { position: absolute; right: 0; bottom: 2px; padding: 0 1px; border-radius: 3px; background: #333; color: #fff; font-size: 5px; line-height: 6px; }
.tray { margin-left: auto; display: flex; align-items: center; gap: 4px; padding-right: 10px; color: #aaa; }
.tray time { color: #eee; font-size: 5px; line-height: 9px; text-align: center; }
.note { margin-left: 6px; }
.note svg { width: 10px; height: 10px; }
```
